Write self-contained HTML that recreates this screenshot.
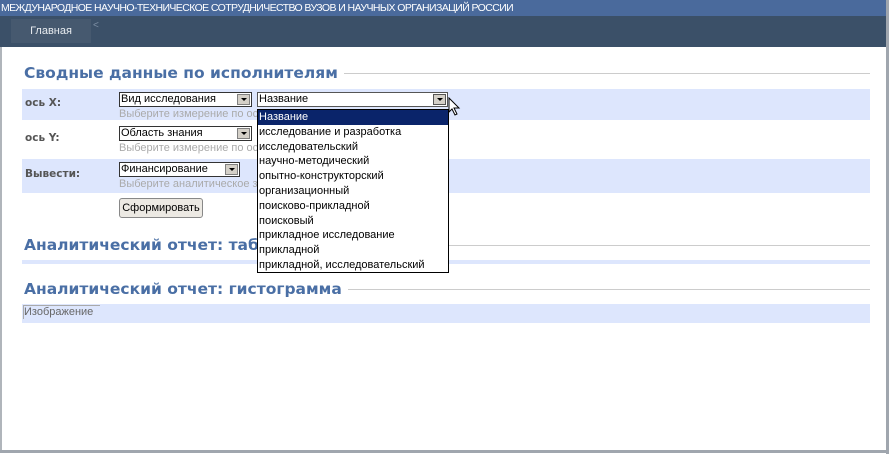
<!DOCTYPE html>
<html><head><meta charset="utf-8"><style>
*{margin:0;padding:0;box-sizing:border-box}
body{width:891px;height:454px;overflow:hidden;background:#fff;font-family:"Liberation Sans","DejaVu Sans",sans-serif;position:relative}
.a{position:absolute}
.top{left:0;top:0;width:888px;height:16px;background:#4a6a9c;color:#fff;font-size:10.5px;line-height:16px;padding-left:1px;letter-spacing:-0.6px}
.nav{left:0;top:16px;width:888px;height:31px;background:#3b5068}
.tab{left:11px;top:19px;width:80px;height:24px;background:#46596f;color:#e8ecf0;font-size:11px;line-height:24px;text-align:center}
.rb{left:886px;top:0;width:3px;height:454px;background:#a0a6ae}
.bb{left:0;top:450px;width:889px;height:3px;background:#a0a6ae}
.lb{left:0;top:47px;width:2px;height:404px;background:#b0b5bb}
h2{position:absolute;left:24px;font-family:"DejaVu Sans",sans-serif;font-size:15.5px;font-weight:bold;color:#4a6fa5;background:#fff;padding-right:6px;line-height:20px}
.ln{position:absolute;left:24px;width:846px;height:1px;background:#ccc}
.band{position:absolute;left:22px;width:848px;background:#dde6fd}
.lbl{position:absolute;left:25px;font-family:"DejaVu Sans",sans-serif;font-size:10.5px;font-weight:bold;color:#555}
.sel{position:absolute;height:15px;background:#fff;border:1px solid #333;font-size:11px;line-height:13px;padding-left:1px;color:#000}
.sel i{position:absolute;right:1px;top:1px;width:13px;height:11px;background:#d4d0c8;border:1px solid #808080;font-style:normal}
.sel i:after{content:"";position:absolute;left:3px;top:3px;border-left:3px solid transparent;border-right:3px solid transparent;border-top:3px solid #000}
.hint{position:absolute;left:119px;font-size:11px;color:#aaa}
.list{left:257px;top:109px;width:192px;height:164px;background:#fff;border:1px solid #000;font-size:11px;line-height:14.8px;color:#000}
.list div{padding-left:1px;height:14.8px}
</style></head><body>
<div class="a top">МЕЖДУНАРОДНОЕ НАУЧНО-ТЕХНИЧЕСКОЕ СОТРУДНИЧЕСТВО ВУЗОВ И НАУЧНЫХ ОРГАНИЗАЦИЙ РОССИИ</div>
<div class="a nav"></div>
<div class="a tab">Главная</div>
<div class="a" style="left:93px;top:20px;color:#7c8ea3;font-size:10px">&lt;</div>
<div class="a lb"></div>

<div class="ln" style="top:73px"></div>
<h2 style="top:63px">Сводные данные по исполнителям</h2>

<div class="band" style="top:89px;height:31px"></div>
<div class="lbl" style="top:97px">ось X:</div>
<div class="sel" style="left:119px;top:92px;width:133px">Вид исследования<i></i></div>
<div class="hint" style="top:108px">Выберите измерение по оси X</div>

<div class="lbl" style="top:132px">ось Y:</div>
<div class="sel" style="left:119px;top:126px;width:133px">Область знания<i></i></div>
<div class="hint" style="top:142px">Выберите измерение по оси Y</div>

<div class="band" style="top:159px;height:34px"></div>
<div class="lbl" style="top:168px">Вывести:</div>
<div class="sel" style="left:119px;top:162px;width:121px">Финансирование<i></i></div>
<div class="hint" style="top:178px">Выберите аналитическое значение</div>

<div class="a" style="left:119px;top:198px;width:84px;height:20px;background:#ece9e3;border:1px solid #888;border-radius:3px;font-size:11px;line-height:18px;text-align:center">Сформировать</div>

<div class="ln" style="top:245px"></div>
<h2 style="top:235px">Аналитический отчет: таблица</h2>
<div class="band" style="top:260px;height:4px"></div>

<div class="ln" style="top:289px"></div>
<h2 style="top:279px">Аналитический отчет: гистограмма</h2>
<div class="band" style="top:304px;height:19px"></div>
<div class="a" style="left:23px;top:305px;width:77px;height:14px;border:1px solid #aaa;border-width:1px 0 0 1px;font-size:11px;color:#666;line-height:12px">Изображение</div>

<div class="sel" style="left:257px;top:92px;width:191px;border-color:#555">Название<i style="border-color:#555"></i></div>
<div class="a list">
<div style="background:#0a246a;color:#fff">Название</div>
<div>исследование и разработка</div>
<div>исследовательский</div>
<div>научно-методический</div>
<div>опытно-конструкторский</div>
<div>организационный</div>
<div>поисково-прикладной</div>
<div>поисковый</div>
<div>прикладное исследование</div>
<div>прикладной</div>
<div>прикладной, исследовательский</div>
</div>
<svg class="a" style="left:448px;top:97px" width="14" height="20" viewBox="0 0 14 20"><path d="M1 1 L1 15 L4 12 L7 18 L9 17 L6 11 L11 11 Z" fill="#fff" stroke="#000" stroke-width="1"/></svg>

<div class="a rb"></div>
<div class="a bb"></div>
</body></html>
